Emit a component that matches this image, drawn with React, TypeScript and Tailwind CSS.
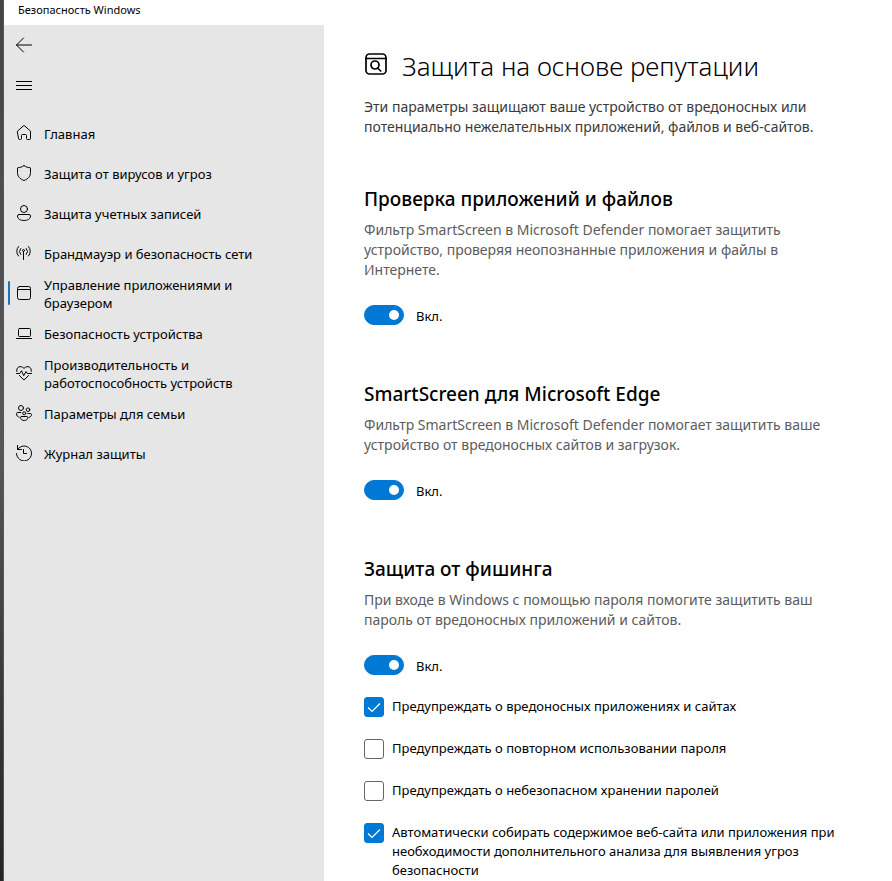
import { useState } from 'react'
import type { ReactNode } from 'react'

interface NavItem {
  id: string
  label: string
  icon: ReactNode
}

interface Section {
  id: string
  title: string
  description: string
}

interface Option {
  id: string
  label: string
  checked: boolean
}

function Icon({ children }: { children: ReactNode }) {
  return (
    <svg
      viewBox="0 0 16 16"
      className="w-4 h-4 shrink-0"
      fill="none"
      stroke="currentColor"
      strokeLinecap="round"
      strokeLinejoin="round"
      aria-hidden="true"
    >
      {children}
    </svg>
  )
}

const navItems: NavItem[] = [
  {
    id: 'home',
    label: 'Главная',
    icon: <path d="M1.500 6.200 7.200 1a1.200 1.200 0 0 1 1.600 0l5.700 5.200v7.300a1 1 0 0 1-1 1h-2a1 1 0 0 1-1-1V10.500a1 1 0 0 0-1-1h-3a1 1 0 0 0-1 1v3a1 1 0 0 1-1 1h-1a1 1 0 0 1-1-1Z" />
  },
  {
    id: 'virus',
    label: 'Защита от вирусов и угроз',
    icon: <path d="M8 .6c2 1.500 4.200 2 6 2.100a.5.5 0 0 1 .5.500v4.300c0 3.800-2.300 6.500-6.500 8-4.200-1.500-6.500-4.200-6.500-8V3.200a.5.5 0 0 1 .5-.5C3.800 2.600 6 2.100 8 .6Z" />
  },
  {
    id: 'account',
    label: 'Защита учетных записей',
    icon: (
      <>
        <circle cx="8" cy="4" r="3.500" />
        <path d="M3 9.500h10a1.500 1.500 0 0 1 1.500 1.500c0 2.800-2.700 4.500-6.500 4.500S1.500 13.800 1.500 11A1.500 1.500 0 0 1 3 9.500Z" />
      </>
    )
  },
  {
    id: 'firewall',
    label: 'Брандмауэр и безопасность сети',
    icon: (
      <>
        <path d="M7.500 6.500v8M2.500 1.500a7 7 0 0 0 0 9.500M12.500 1.500a7 7 0 0 1 0 9.500M4.700 3.500a4.500 4.500 0 0 0 0 6M10.300 3.500a4.500 4.500 0 0 1 0 6" />
        <circle cx="7.500" cy="5.500" r="1" />
      </>
    )
  },
  {
    id: 'apps',
    label: 'Управление приложениями и браузером',
    icon: (
      <>
        <rect x="1.500" y="1.500" width="13" height="13" rx="2" />
        <path d="M1.500 4.500h13" />
      </>
    )
  },
  {
    id: 'device',
    label: 'Безопасность устройства',
    icon: (
      <>
        <rect x="2.500" y="3.500" width="12" height="8" rx="1" />
        <path d="M.5 13.500h15" />
      </>
    )
  },
  {
    id: 'performance',
    label: 'Производительность и работоспособность устройств',
    icon: (
      <>
        <path d="M.8 6.500C-.2 2 4.700-.2 8 3.400 11.300-.2 16.200 2 15.200 6.500M3.400 10.500 8 15l4.600-4.500" />
        <path d="M.5 8.500h3.200l1.800-2.800 2.200 5 2.300-4.200 1.300 2h4.200" />
      </>
    )
  },
  {
    id: 'family',
    label: 'Параметры для семьи',
    icon: (
      <>
        <circle cx="5" cy="3" r="2.500" />
        <circle cx="12" cy="4.700" r="1.800" />
        <circle cx="8.200" cy="8.300" r="1.500" />
        <path d="M4.800 7.500H1.700A1.200 1.200 0 0 0 .5 8.700c0 1.800 1 3.100 2.600 3.500M11.800 8.500h2.500a1.200 1.200 0 0 1 1.200 1.200c0 1.300-1 2.400-2.500 2.700M5.500 11.500h5.300a1 1 0 0 1 1 1c0 1.800-1.500 3-3.600 3s-3.700-1.200-3.700-3a1 1 0 0 1 1-1Z" />
      </>
    )
  },
  {
    id: 'history',
    label: 'Журнал защиты',
    icon: <path d="M1.500 .5v4h4M1.800 4.200A7.500 7.500 0 1 1 .5 8.500M7.500 4.500v4h3" />
  }
]

const sections: Section[] = [
  {
    id: 'files',
    title: 'Проверка приложений и файлов',
    description:
      'Фильтр SmartScreen в Microsoft Defender помогает защитить устройство, проверяя неопознанные приложения и файлы в Интернете.'
  },
  {
    id: 'edge',
    title: 'SmartScreen для Microsoft Edge',
    description:
      'Фильтр SmartScreen в Microsoft Defender помогает защитить ваше устройство от вредоносных сайтов и загрузок.'
  },
  {
    id: 'phishing',
    title: 'Защита от фишинга',
    description:
      'При входе в Windows с помощью пароля помогите защитить ваш пароль от вредоносных приложений и сайтов.'
  }
]

const options: Option[] = [
  { id: 'malicious', label: 'Предупреждать о вредоносных приложениях и сайтах', checked: true },
  { id: 'reuse', label: 'Предупреждать о повторном использовании пароля', checked: false },
  { id: 'storage', label: 'Предупреждать о небезопасном хранении паролей', checked: false },
  {
    id: 'collect',
    label:
      'Автоматически собирать содержимое веб-сайта или приложения при необходимости дополнительного анализа для выявления угроз безопасности',
    checked: true
  }
]

function Toggle({ label }: { label: string }) {
  const [on, setOn] = useState(true)

  return (
    <label className="flex items-center gap-3 w-fit h-5 text-[13px] leading-[18px] cursor-pointer">
      <input
        type="checkbox"
        role="switch"
        aria-label={label}
        checked={on}
        onChange={() => setOn(!on)}
        className="peer sr-only"
      />
      <span className="flex items-center w-10 h-5 px-1 rounded-full border border-[#666] peer-checked:justify-end peer-checked:bg-[#0078d4] peer-checked:border-[#0078d4] [&>i]:bg-[#666] peer-checked:[&>i]:bg-white">
        <i className="block w-[10px] h-[10px] rounded-full" />
      </span>
      <span className="pt-[2px]">{on ? 'Вкл.' : 'Откл.'}</span>
    </label>
  )
}

function CheckOption({ option }: { option: Option }) {
  const [checked, setChecked] = useState(option.checked)

  return (
    <label className="flex items-start gap-2 text-[13px] leading-[19px] cursor-pointer">
      <span className="grid shrink-0 w-5 h-5">
        <input
          type="checkbox"
          checked={checked}
          onChange={() => setChecked(!checked)}
          className="peer col-start-1 row-start-1 appearance-none w-5 h-5 rounded-[3px] border border-[#666] bg-white checked:bg-[#0078d4] checked:border-[#0078d4]"
        />
        <svg
          viewBox="0 0 20 20"
          className="col-start-1 row-start-1 w-5 h-5 pointer-events-none invisible peer-checked:visible"
          fill="none"
          stroke="white"
          strokeWidth="1.200"
          aria-hidden="true"
        >
          <path d="m4 10.500 4 4 8-8" />
        </svg>
      </span>
      <span>{option.label}</span>
    </label>
  )
}

export default function App() {
  const [active, setActive] = useState('apps')

  return (
    <div className="flex min-h-screen bg-white text-black font-['Noto_Sans','Open_Sans',sans-serif]">
      {/* Desktop visible behind the window edge */}
      <div className="w-1 shrink-0 border-r border-[#555] bg-linear-to-b from-[#444] via-[#58575b] to-[#242424]" />

      <div className="flex flex-col flex-1 min-w-0">
        <header className="h-[25px] shrink-0 px-[14px] text-[11px] leading-5">Безопасность Windows</header>

        <div className="flex flex-1">
          {/* Sidebar */}
          <aside className="w-80 shrink-0 bg-[#e6e6e6]">
            <button aria-label="Назад" className="flex items-center w-full h-10 px-3">
              <Icon>
                <path d="M.5 8h15M7.500 1 .5 8l7 7" />
              </Icon>
            </button>
            <button aria-label="Меню" className="flex items-center w-full h-10 px-3">
              <Icon>
                <path d="M0 4.500h16M0 8.500h16M0 12.500h16" strokeLinecap="butt" />
              </Icon>
            </button>

            <nav className="mt-2">
              {navItems.map((item) => (
                <button
                  key={item.id}
                  onClick={() => setActive(item.id)}
                  className="relative flex items-center gap-3 w-full h-10 pl-3 pr-16 text-left text-[13px] leading-[18px]"
                >
                  {active === item.id && (
                    <span className="absolute left-1 top-2 w-[2px] h-6 rounded-full bg-[#1874b8]" />
                  )}
                  <Icon>{item.icon}</Icon>
                  <span className="pt-[2px]">{item.label}</span>
                </button>
              ))}
            </nav>
          </aside>

          {/* Settings */}
          <main className="flex-1 min-w-0 px-10 pt-5">
            <div className="flex items-start gap-[14px] h-10">
              <svg
                viewBox="0 0 24 24"
                className="w-6 h-6 mt-[7px] shrink-0"
                fill="none"
                stroke="currentColor"
                strokeWidth="1.700"
                strokeLinecap="round"
                aria-hidden="true"
              >
                <rect x="2" y="2" width="20" height="20" rx="3.500" />
                <path d="M2 6.500h20M13.500 16l3.200 3" />
                <circle cx="11" cy="13" r="4" />
              </svg>
              <h1 className="text-[26px] leading-[42px] font-light">Защита на основе репутации</h1>
            </div>
            <p className="mt-3 text-sm leading-5 text-[#3a3a3a]">
              Эти параметры защищают ваше устройство от вредоносных или потенциально нежелательных
              приложений, файлов и веб-сайтов.
            </p>

            <div className="mt-12 space-y-[55px]">
              {sections.map((section) => (
                <section key={section.id}>
                  <h2 className="text-[19px] leading-7 font-medium">{section.title}</h2>
                  <p className="mt-[7px] mb-[25px] text-sm leading-5 text-[#5c5c5c]">{section.description}</p>
                  <Toggle label={section.title} />
                </section>
              ))}
            </div>

            <div className="mt-[22px] space-y-[22px]">
              {options.map((option) => (
                <CheckOption key={option.id} option={option} />
              ))}
            </div>
          </main>
        </div>
      </div>
    </div>
  )
}
